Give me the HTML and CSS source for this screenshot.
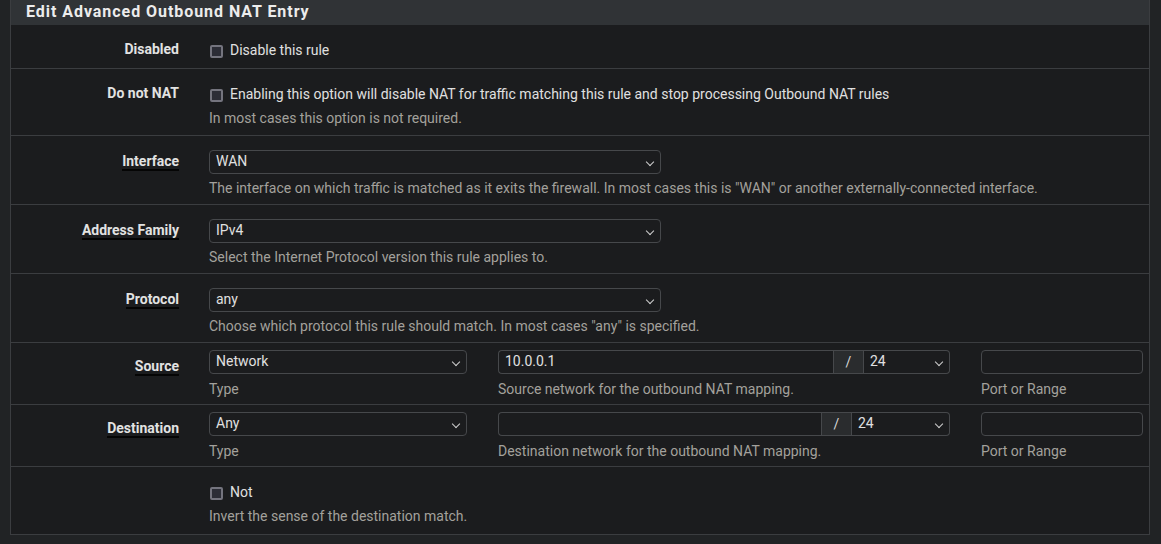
FILE: index.html
```html
<!DOCTYPE html>
<html>
<head>
<meta charset="utf-8">
<link rel="stylesheet" href="styles.css">
</head>
<body>
<div class="page">
  <div class="panel">
    <div class="panel-heading">Edit Advanced Outbound NAT Entry</div>
    <div class="panel-body">
      <div class="row">
        <div class="label">Disabled</div>
        <div class="ctrl">
          <label class="check"><span class="box"></span>Disable this rule</label>
        </div>
      </div>
      <div class="row">
        <div class="label">Do not NAT</div>
        <div class="ctrl">
          <label class="check"><span class="box"></span>Enabling this option will disable NAT for traffic matching this rule and stop processing Outbound NAT rules</label>
          <div class="help help-check">In most cases this option is not required.</div>
        </div>
      </div>
      <div class="row row-sel">
        <div class="label"><span class="u">Interface</span></div>
        <div class="ctrl">
          <div class="select wide">WAN<span class="chev"></span></div>
          <div class="help">The interface on which traffic is matched as it exits the firewall. In most cases this is "WAN" or another externally-connected interface.</div>
        </div>
      </div>
      <div class="row row-sel">
        <div class="label"><span class="u">Address Family</span></div>
        <div class="ctrl">
          <div class="select wide">IPv4<span class="chev"></span></div>
          <div class="help">Select the Internet Protocol version this rule applies to.</div>
        </div>
      </div>
      <div class="row row-sel">
        <div class="label"><span class="u">Protocol</span></div>
        <div class="ctrl">
          <div class="select wide">any<span class="chev"></span></div>
          <div class="help">Choose which protocol this rule should match. In most cases "any" is specified.</div>
        </div>
      </div>
      <div class="row row-multi">
        <div class="label"><span class="u">Source</span></div>
        <div class="ctrl trio">
          <div class="cell">
            <div class="select">Network<span class="chev"></span></div>
            <div class="help">Type</div>
          </div>
          <div class="cell">
            <div class="group">
              <div class="input grow">10.0.0.1</div>
              <div class="addon">/</div>
              <div class="select mask">24<span class="chev"></span></div>
            </div>
            <div class="help">Source network for the outbound NAT mapping.</div>
          </div>
          <div class="cell">
            <div class="input"></div>
            <div class="help">Port or Range</div>
          </div>
        </div>
      </div>
      <div class="row row-multi">
        <div class="label"><span class="u">Destination</span></div>
        <div class="ctrl trio">
          <div class="cell">
            <div class="select">Any<span class="chev"></span></div>
            <div class="help">Type</div>
          </div>
          <div class="cell">
            <div class="group">
              <div class="input grow"></div>
              <div class="addon">/</div>
              <div class="select mask mask-wide">24<span class="chev"></span></div>
            </div>
            <div class="help">Destination network for the outbound NAT mapping.</div>
          </div>
          <div class="cell">
            <div class="input"></div>
            <div class="help">Port or Range</div>
          </div>
        </div>
      </div>
      <div class="row row-last">
        <div class="label"></div>
        <div class="ctrl">
          <label class="check"><span class="box"></span>Not</label>
          <div class="help help-check">Invert the sense of the destination match.</div>
        </div>
      </div>
    </div>
  </div>
</div>
</body>
</html>
```

FILE: styles.css
```css
html, body {
  margin: 0;
  padding: 0;
  background: #212325;
  font-family: Roboto, "Liberation Sans", sans-serif;
  font-size: 14px;
  color: #dcdcdc;
}

.page {
  padding: 0 11px 0 10px;
}

.panel {
  border: 1px solid #3b3d40;
  border-top: none;
  background: #1b1c1e;
}

.panel-heading {
  background: #303336;
  color: #ececec;
  font-weight: bold;
  font-size: 16px;
  letter-spacing: 0.95px;
  height: 25px;
  line-height: 24px;
  padding-left: 15px;
}

.row {
  display: grid;
  grid-template-columns: 168px 1fr;
  column-gap: 30px;
  padding: 14px 0 7px 0;
  border-top: 1px solid #3b3d40;
}

.panel-heading + .panel-body .row:first-child {
  border-top: none;
}

.row-sel {
  padding: 14px 0 6px 0;
}

.row-multi {
  padding: 7px 0 5px 0;
}

.row-last {
  padding-bottom: 8px;
}

.label {
  text-align: right;
  font-weight: bold;
  line-height: 20px;
  color: #e2e2e2;
  padding-top: 0;
}

.row-sel .label {
  padding-top: 1px;
}

.row-multi .label {
  padding-top: 6px;
}

.label .u {
  border-bottom: 2px solid #050505;
  padding-bottom: 0;
}

.ctrl {
  min-width: 0;
}

.check {
  display: flex;
  align-items: center;
  line-height: 20px;
  height: 22px;
  color: #e0e0e0;
}

.box {
  box-sizing: border-box;
  width: 13px;
  height: 13px;
  border: 2px solid #74747e;
  border-radius: 2px;
  background: #2c2d36;
  margin: 2px 7px 0 1px;
  flex: none;
}

.help {
  color: #a3a19c;
  line-height: 20px;
  margin-top: 4px;
}

.help-check {
  margin-top: 3px;
}

.row-multi .help {
  margin-top: 5px;
}

.select, .input {
  box-sizing: border-box;
  height: 24px;
  border: 1px solid #46484b;
  border-radius: 4px;
  background: #1b1c1e;
  color: #e0e0e0;
  line-height: 21px;
  padding: 0 6px;
  position: relative;
}

.select.wide {
  width: 452px;
}

.chev {
  position: absolute;
  right: 7px;
  top: 8px;
  width: 5px;
  height: 5px;
  border-right: 1.5px solid #cfcfcf;
  border-bottom: 1.5px solid #cfcfcf;
  transform: rotate(45deg);
}

.trio {
  display: grid;
  grid-template-columns: 258px 452px 162px;
  column-gap: 31px;
}

.group {
  display: flex;
}

.group .grow {
  flex: 1;
  border-radius: 4px 0 0 4px;
  border-right: none;
}

.addon {
  box-sizing: border-box;
  width: 31px;
  height: 24px;
  line-height: 22px;
  text-align: center;
  background: #2a2c2e;
  border: 1px solid #46484b;
  color: #d8d8d8;
}

.select.mask {
  width: 86px;
  border-left: none;
  border-radius: 0 4px 4px 0;
}

.select.mask-wide {
  width: 98px;
}
```
